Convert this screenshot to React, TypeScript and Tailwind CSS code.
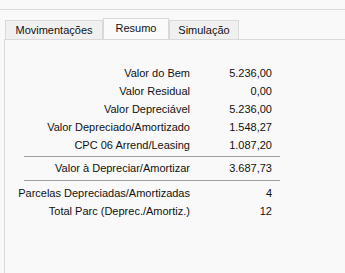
import React from "react";

const rows1 = [
  ["Valor do Bem", "5.236,00"],
  ["Valor Residual", "0,00"],
  ["Valor Depreciável", "5.236,00"],
  ["Valor Depreciado/Amortizado", "1.548,27"],
  ["CPC 06 Arrend/Leasing", "1.087,20"],
];

function Row({ l, v }: { l: string; v: string }) {
  return (
    <div className="flex h-[18px] items-center">
      <div className="w-[185px] text-right">{l}</div>
      <div className="w-[82px] text-right">{v}</div>
    </div>
  );
}

export default function App() {
  return (
    <div
      className="w-[345px] h-[273px] bg-[#f9f9f9] text-[11px] text-[#111] overflow-hidden"
      style={{ fontFamily: '"Liberation Sans", Arial, sans-serif' }}
    >
      <div className="h-[9px]" />
      <div className="h-px bg-[#dcdcdc]" />
      <div className="h-[8px]" />
      <div className="flex items-end pl-[5px] h-[21px]">
        <div className="w-[98px] h-[19px] bg-[#f0f0f0] border border-b-0 border-[#d9d9d9] flex items-center justify-center pt-[1px]">
          Movimentações
        </div>
        <div className="w-[66px] h-[21px] bg-[#fafafa] border border-b-0 border-[#d9d9d9] flex items-center justify-center pb-[2px]">
          Resumo
        </div>
        <div className="w-[70px] h-[19px] bg-[#f0f0f0] border border-b-0 border-[#d9d9d9] flex items-center justify-center pt-[1px]">
          Simulação
        </div>
      </div>
      <div className="flex">
        <div className="w-[4px] h-[240px]" />
        <div className="flex-1 h-[240px] border-l border-t border-[#d9d9d9] bg-[#f9f9f9]">
          <div className="pt-[24px]">
            {rows1.map(([l, v]) => (
              <Row key={l} l={l} v={v} />
            ))}
            <div className="ml-[19px] w-[256px] h-px bg-[#a0a0a0] mt-[2px] mb-[2px]" />
            <Row l="Valor à Depreciar/Amortizar" v="3.687,73" />
            <div className="ml-[19px] w-[256px] h-px bg-[#a0a0a0] mt-[3px] mb-[3px]" />
            <Row l="Parcelas Depreciadas/Amortizadas" v="4" />
            <Row l="Total Parc (Deprec./Amortiz.)" v="12" />
          </div>
        </div>
      </div>
    </div>
  );
}
